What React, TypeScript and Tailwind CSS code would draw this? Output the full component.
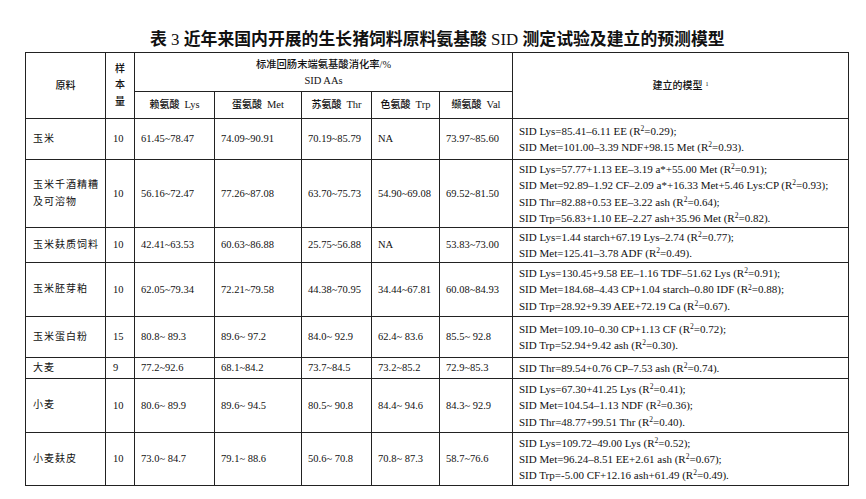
import React from "react";

const serif = "font-['Liberation_Serif','Noto_Sans_CJK_SC',serif]";

type Row = {
  name: string[];
  n: string;
  vals: string[];
  models: React.ReactNode[];
  h: string;
};

const R2 = (v: string, tail = ";") => (
  <>
    (R<sup className="text-[7.5px]">2</sup>={v}){tail}
  </>
);

const rows: Row[] = [
  {
    name: ["玉米"],
    n: "10",
    vals: ["61.45~78.47", "74.09~90.91", "70.19~85.79", "NA", "73.97~85.60"],
    models: [
      <>SID Lys=85.41–6.11 EE {R2("0.29")}</>,
      <>SID Met=101.00–3.39 NDF+98.15 Met {R2("0.93", ".")}</>,
    ],
    h: "h-[41px]",
  },
  {
    name: ["玉米千酒精糟", "及可溶物"],
    n: "10",
    vals: ["56.16~72.47", "77.26~87.08", "63.70~75.73", "54.90~69.08", "69.52~81.50"],
    models: [
      <>SID Lys=57.77+1.13 EE–3.19 a*+55.00 Met {R2("0.91")}</>,
      <>SID Met=92.89–1.92 CF–2.09 a*+16.33 Met+5.46 Lys:CP {R2("0.93")}</>,
      <>SID Thr=82.88+0.53 EE–3.22 ash {R2("0.64")}</>,
      <>SID Trp=56.83+1.10 EE–2.27 ash+35.96 Met {R2("0.82", ".")}</>,
    ],
    h: "h-[68px]",
  },
  {
    name: ["玉米麸质饲料"],
    n: "10",
    vals: ["42.41~63.53", "60.63~86.88", "25.75~56.88", "NA", "53.83~73.00"],
    models: [
      <>SID Lys=1.44 starch+67.19 Lys–2.74 {R2("0.77")}</>,
      <>SID Met=125.41–3.78 ADF {R2("0.49", ".")}</>,
    ],
    h: "h-[35px]",
  },
  {
    name: ["玉米胚芽粕"],
    n: "10",
    vals: ["62.05~79.34", "72.21~79.58", "44.38~70.95", "34.44~67.81", "60.08~84.93"],
    models: [
      <>SID Lys=130.45+9.58 EE–1.16 TDF–51.62 Lys {R2("0.91")}</>,
      <>SID Met=184.68–4.43 CP+1.04 starch–0.80 IDF {R2("0.88")}</>,
      <>SID Trp=28.92+9.39 AEE+72.19 Ca {R2("0.67", ".")}</>,
    ],
    h: "h-[54px]",
  },
  {
    name: ["玉米蛋白粉"],
    n: "15",
    vals: ["80.8~ 89.3", "89.6~ 97.2", "84.0~ 92.9", "62.4~ 83.6", "85.5~ 92.8"],
    models: [
      <>SID Met=109.10–0.30 CP+1.13 CF {R2("0.72")}</>,
      <>SID Trp=52.94+9.42 ash {R2("0.30", ".")}</>,
    ],
    h: "h-[41px]",
  },
  {
    name: ["大麦"],
    n: "9",
    vals: ["77.2~92.6", "68.1~84.2", "73.7~84.5", "73.2~85.2", "72.9~85.3"],
    models: [<>SID Thr=89.54+0.76 CP–7.53 ash {R2("0.74", ".")}</>],
    h: "h-[21px]",
  },
  {
    name: ["小麦"],
    n: "10",
    vals: ["80.6~ 89.9", "89.6~ 94.5", "80.5~ 90.8", "84.4~ 94.6", "84.3~ 92.9"],
    models: [
      <>SID Lys=67.30+41.25 Lys {R2("0.41")}</>,
      <>SID Met=104.54–1.13 NDF {R2("0.36")}</>,
      <>SID Thr=48.77+99.51 Thr {R2("0.40", ".")}</>,
    ],
    h: "h-[54px]",
  },
  {
    name: ["小麦麸皮"],
    n: "10",
    vals: ["73.0~ 84.7", "79.1~ 88.6", "50.6~ 70.8", "70.8~ 87.3", "58.7~76.6"],
    models: [
      <>SID Lys=109.72–49.00 Lys {R2("0.52")}</>,
      <>SID Met=96.24–8.51 EE+2.61 ash {R2("0.67")}</>,
      <>SID Trp=-5.00 CF+12.16 ash+61.49 {R2("0.49", ".")}</>,
    ],
    h: "h-[53px]",
  },
];

const subHeads: [string, string][] = [
  ["赖氨酸", "Lys"],
  ["蛋氨酸", "Met"],
  ["苏氨酸", "Thr"],
  ["色氨酸", "Trp"],
  ["缬氨酸", "Val"],
];

const cell = "border border-[#222] align-middle";

export default function App() {
  return (
    <div className={`w-[866px] h-[499px] bg-white text-[#111] ${serif}`}>
      <div className="h-[52px] pt-[30px] pl-[150px] text-[16.85px] leading-[20px] font-bold whitespace-nowrap">
        表<span className="font-normal"> 3 </span>近年来国内开展的生长猪饲料原料氨基酸
        <span className="font-normal"> SID </span>测定试验及建立的预测模型
      </div>
      <table className="ml-[25px] w-[823px] table-fixed border-collapse border-[1.5px] border-[#222] text-[10.5px]">
        <colgroup>
          <col className="w-[80px]" />
          <col className="w-[29px]" />
          <col className="w-[80px]" />
          <col className="w-[87px]" />
          <col className="w-[70px]" />
          <col className="w-[68px]" />
          <col className="w-[73px]" />
          <col className="w-[336px]" />
        </colgroup>
        <thead>
          <tr className="h-[39px]">
            <th rowSpan={2} className={`${cell} text-center text-[10px] font-medium`}>
              原料
            </th>
            <th rowSpan={2} className={`${cell} text-center text-[10px] font-medium leading-[16.5px]`}>
              样<br />本<br />量
            </th>
            <th colSpan={5} className={`${cell} text-center font-normal leading-[16px] pt-[1px]`}>
              <div className="text-[10.3px] font-medium">标准回肠末端氨基酸消化率/%</div>
              <div className="text-[10.5px]">SID AAs</div>
            </th>
            <th rowSpan={2} className={`${cell} text-center font-normal`}>
              <span className="text-[10px] font-medium">建立的模型</span>
              <sup className="text-[6px] ml-[3px]">1</sup>
            </th>
          </tr>
          <tr className="h-[27px]">
            {subHeads.map(([zh, en]) => (
              <th key={en} className={`${cell} text-center font-normal whitespace-nowrap`}>
                <span className="text-[10px] font-medium">{zh}</span>
                <span className="ml-[5px] text-[10.5px]">{en}</span>
              </th>
            ))}
          </tr>
        </thead>
        <tbody>
          {rows.map((r, i) => (
            <tr key={i} className={r.h}>
              <td className={`${cell} pl-[7px] text-[10px] leading-[16.5px] tracking-[1px]`}>
                {r.name.map((t) => (
                  <div key={t}>{t}</div>
                ))}
              </td>
              <td className={`${cell} pl-[7px]`}>{r.n}</td>
              {r.vals.map((v, j) => (
                <td key={j} className={`${cell} pl-[6px] whitespace-pre`}>
                  {v}
                </td>
              ))}
              <td className={`${cell} pl-[6px] text-[11px] leading-[16.3px]`}>
                {r.models.map((m, k) => (
                  <div key={k} className="whitespace-nowrap">
                    {m}
                  </div>
                ))}
              </td>
            </tr>
          ))}
        </tbody>
      </table>
    </div>
  );
}
